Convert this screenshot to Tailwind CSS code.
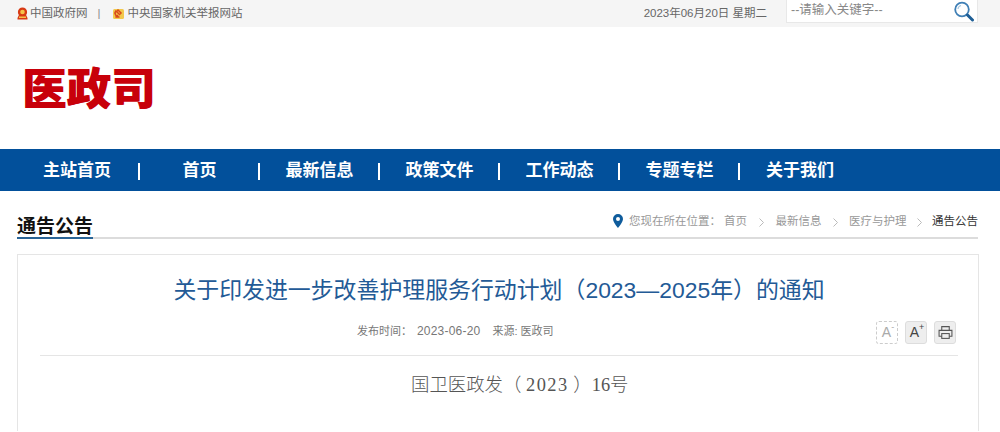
<!DOCTYPE html>
<html lang="zh-CN">
<head>
<meta charset="UTF-8">
<title>关于印发进一步改善护理服务行动计划(2023—2025年)的通知</title>
<script src="https://cdn.jsdelivr.net/npm/@tailwindcss/browser@4"></script>
</head>
<body class="bg-white font-['Liberation_Sans','Noto_Sans_CJK_SC',sans-serif] h-[432px] overflow-hidden">

<!-- top bar -->
<div class="h-[27px] bg-[#f5f5f5] pl-[17px] pr-[22px] flex items-center text-[11.5px] text-[#666]">
  <svg class="w-[11px] h-[13px] mr-[2px]" viewBox="0 0 11 13"><path d="M5.500 0.500a4.600 4.600 0 0 1 4.600 4.600c0 1.200-.3 2.200-1 3l1.400 3v1.400H.5v-1.400l1.400-3c-.7-.8-1-1.800-1-3A4.600 4.600 0 0 1 5.500.5z" fill="#d83a14"/><circle cx="5.500" cy="5" r="2.300" fill="#f4c24a"/><rect x="2" y="9.500" width="7" height="1.500" fill="#f4c24a"/></svg>
  <span>中国政府网</span>
  <span class="ml-[10px] mr-[12px] text-[#888]">|</span>
  <svg class="w-[11px] h-[12px] mr-[4px]" viewBox="0 0 11 12"><rect x="0" y="1" width="11" height="10" rx="1.500" fill="#f2c84b"/><path d="M3 2.500a4 4 0 0 0 3.500 6.500 M5 2l3 3-1.500 1.500-3-3z M2.500 9.500 5 7" stroke="#d9481c" stroke-width="1.500" fill="none"/></svg>
  <span>中央国家机关举报网站</span>
  <span class="ml-auto mr-[19px]">2023年06月20日 星期二</span>
  <div class="w-[192px] h-[23px] -mt-[4px] bg-white border-b border-r border-l border-[#e8e8e8] flex items-center pl-[4px] pr-[2px] text-[#888] text-[12.5px]">
    <span class="-mt-[1px]">--请输入关键字--</span>
    <svg class="ml-auto w-[22px] h-[21px]" viewBox="0 0 22 21" fill="none"><circle cx="9" cy="8.500" r="6.800" stroke="#3f7fb5" stroke-width="1.800"/><path d="M5 8a4 4 0 0 1 3-3.500" stroke="#a9c8e0" stroke-width="1.200"/><path d="M14.500 14l5 5" stroke="#1f5f96" stroke-width="3" stroke-linecap="round"/></svg>
  </div>
</div>

<!-- logo -->
<div class="h-[122px] pl-[22px] pt-[38px]">
  <div class="text-[44px] leading-[50px] font-black text-[#c8000a] tracking-[0.5px] [text-shadow:1px_0_0_#c8000a]">医政司</div>
</div>

<!-- nav -->
<nav class="h-[42px] bg-[#02509b] pl-[17px] pt-[2px] flex items-center text-white text-[17px] font-bold">
  <div class="w-[120px] flex items-center"><a class="flex-1 text-center">主站首页</a><i class="w-[2px] h-[17px] bg-white ml-[1px] -mr-[3px]"></i></div>
  <div class="w-[120px] flex items-center"><a class="flex-1 text-center pl-[5px]">首页</a><i class="w-[2px] h-[17px] bg-white ml-[1px] -mr-[3px]"></i></div>
  <div class="w-[120px] flex items-center"><a class="flex-1 text-center pl-[5px]">最新信息</a><i class="w-[2px] h-[17px] bg-white ml-[1px] -mr-[3px]"></i></div>
  <div class="w-[120px] flex items-center"><a class="flex-1 text-center pl-[5px]">政策文件</a><i class="w-[2px] h-[17px] bg-white ml-[1px] -mr-[3px]"></i></div>
  <div class="w-[120px] flex items-center"><a class="flex-1 text-center pl-[5px]">工作动态</a><i class="w-[2px] h-[17px] bg-white ml-[1px] -mr-[3px]"></i></div>
  <div class="w-[120px] flex items-center"><a class="flex-1 text-center pl-[5px]">专题专栏</a><i class="w-[2px] h-[17px] bg-white ml-[1px] -mr-[3px]"></i></div>
  <div class="w-[120px] flex items-center"><a class="flex-1 text-center pl-[6px]">关于我们</a></div>
</nav>

<!-- breadcrumb row -->
<div class="mx-[17px] mt-[20px] w-[961px] h-[28px] border-b-2 border-[#dcdcdc] flex justify-between">
  <div class="h-[28px] border-b-2 border-[#2a6496] text-[19px] leading-[32px] font-bold text-[#111]">通告公告</div>
  <div class="flex items-center h-[22px] text-[11.5px] text-[#999]">
    <svg class="w-[10px] h-[14px] mr-[6px] -mt-[2px]" viewBox="0 0 10 14"><path fill-rule="evenodd" d="M5 0a5 5 0 0 1 5 5c0 3.300-5 9-5 9S0 8.300 0 5a5 5 0 0 1 5-5zm0 3a2 2 0 1 0 0 4 2 2 0 0 0 0-4z" fill="#0f5c9c"/></svg>
    <span>您现在所在位置&#xFF1A;</span>
    <span class="ml-[3px]">首页</span>
    <svg class="w-[5px] h-[9px] ml-[12px] mr-[11.500px]" viewBox="0 0 5 9" fill="none" stroke="#bbb"><path d="M.5.5l4 4-4 4"/></svg>
    <span>最新信息</span>
    <svg class="w-[5px] h-[9px] ml-[11px] mr-[11.500px]" viewBox="0 0 5 9" fill="none" stroke="#bbb"><path d="M.5.5l4 4-4 4"/></svg>
    <span>医疗与护理</span>
    <svg class="w-[5px] h-[9px] ml-[10px] mr-[10.500px]" viewBox="0 0 5 9" fill="none" stroke="#bbb"><path d="M.5.5l4 4-4 4"/></svg>
    <span class="text-[#333]">通告公告</span>
  </div>
</div>

<!-- article -->
<div class="ml-[17px] mt-[15px] w-[962px] h-[177px] border border-b-0 border-[#e5e5e5] pl-[22px] pr-[20px] overflow-hidden">
  <h1 class="mt-[18px] text-center text-[22.9px] leading-[34px] text-[#235a96]">关于印发进一步改善护理服务行动计划&#xFF08;2023—2025年&#xFF09;的通知</h1>
  <div class="relative h-[35px] mt-[14px] border-b border-[#e5e5e5]">
    <div class="absolute left-[317px] top-[0px] text-[11px] leading-[20px] text-[#777]">发布时间&#xFF1A;<span class="ml-[5px] text-[12px] tracking-[0.2px]">2023-06-20</span><span class="ml-[12px]">来源: 医政司</span></div>
    <div class="absolute right-[2px] top-[0px] flex gap-[7px]">
      <div class="w-[22px] h-[23px] border border-dashed border-[#ccc] rounded-[3px] flex items-center justify-center text-[14px] text-[#aaa]">A<sup class="text-[9px] -mt-[3px] -mr-[2px]">-</sup></div>
      <div class="w-[22px] h-[23px] border border-[#ddd] bg-[#eee] rounded-[3px] flex items-center justify-center text-[14px] text-[#444]">A<sup class="text-[9px] -mt-[3px] -mr-[2px]">+</sup></div>
      <div class="w-[22px] h-[23px] border border-[#ddd] bg-[#eee] rounded-[3px] flex items-center justify-center">
        <svg class="w-[15px] h-[15px]" viewBox="0 0 14 14" fill="none" stroke="#555"><path d="M3.500 5V1.500h7V5M3.500 10.500H1V5h12v5.500h-2.500"/><rect x="3.500" y="8" width="7" height="4.500"/></svg>
      </div>
    </div>
  </div>
  <p class="mt-[16px] pl-[371px] text-[18.4px] leading-[26px] text-[#555] font-['Liberation_Serif','Noto_Sans_CJK_SC',serif] font-light">国卫医政发&#xFF08; <span class="tracking-[1.500px]">2023</span> &#xFF09;16号</p>
</div>
</body>
</html>
